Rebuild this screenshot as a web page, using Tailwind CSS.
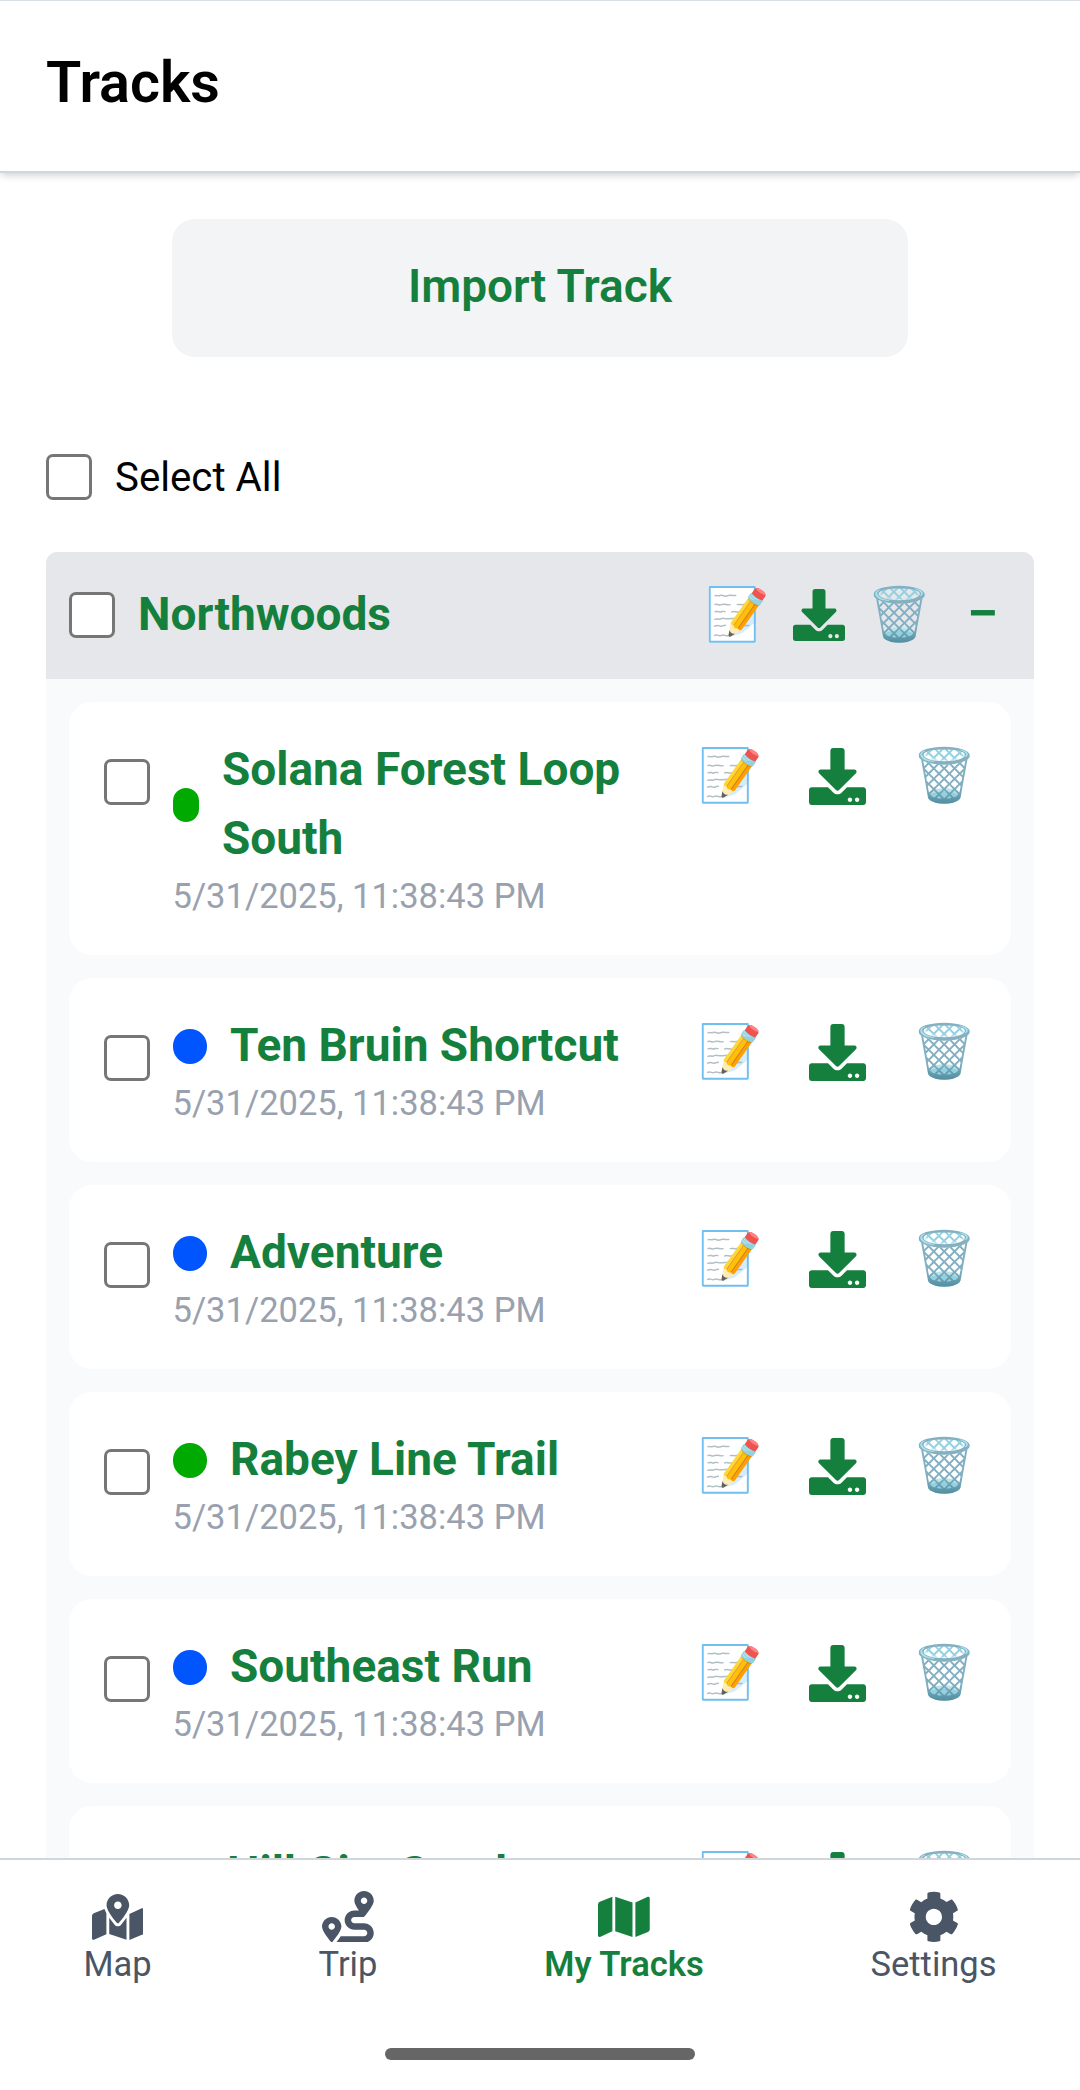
<!DOCTYPE html>
<html lang="en">
<head>
<meta charset="utf-8">
<title>Tracks</title>
<script src="https://cdn.jsdelivr.net/npm/@tailwindcss/browser@4"></script>
</head>
<body class="h-[2090px] w-[1080px] overflow-hidden bg-white font-[Roboto,sans-serif] text-black">
<svg class="hidden">
  <symbol id="download" viewBox="0 0 512 512"><path d="M216 0h80c13.3 0 24 10.7 24 24v168h87.7c17.8 0 26.7 21.5 14.1 34.1L269.7 378.3c-7.5 7.5-19.8 7.5-27.3 0L90.1 226.1c-12.6-12.6-3.7-34.1 14.1-34.1H192V24c0-13.3 10.7-24 24-24zm296 376v112c0 13.3-10.7 24-24 24H24c-13.3 0-24-10.7-24-24V376c0-13.3 10.7-24 24-24h146.7l49 49c20.1 20.1 52.5 20.1 72.6 0l49-49H488c13.3 0 24 10.7 24 24zm-124 88c0-11-9-20-20-20s-20 9-20 20 9 20 20 20 20-9 20-20zm64 0c0-11-9-20-20-20s-20 9-20 20 9 20 20 20 20-9 20-20z"/></symbol>
</svg>
<div class="flex h-full flex-col">
  <header class="relative z-10 flex h-[173px] shrink-0 items-center border-t border-b-2 border-t-[#d9e0ea] border-b-gray-300 bg-white px-[46px] pb-[6px] shadow-[0_3px_8px_-1px_rgba(0,0,0,0.2)]">
    <h1 class="text-[57.5px] leading-[80px] font-semibold">Tracks</h1>
  </header>

  <main class="flex min-h-0 flex-1 flex-col overflow-hidden px-[46px] pt-[46px]">
    <button class="h-[138px] w-[736px] shrink-0 self-center rounded-[23px] bg-gray-100 pb-[4px] text-[46px] font-semibold text-[#15803d]">Import Track</button>

    <label class="mt-[97px] flex h-[46px] shrink-0 items-center gap-[23px] text-[40.25px] leading-[46px]">
      <span class="size-[46px] rounded-[7px] border-3 border-[#767676] bg-white"></span><span class="pt-[2px]">Select All</span>
    </label>

    <section class="mt-[52px] shrink-0 overflow-hidden rounded-[11.5px] bg-gray-50">
      <div class="flex h-[127px] items-center bg-gray-200 pr-[34px] pb-[2px] pl-[23px] text-[46px] font-bold text-[#15803d]">
        <span class="mr-[23px] size-[46px] rounded-[7px] border-3 border-[#767676] bg-white"></span>
        <h2 class="flex-1">Northwoods</h2>
        <span class="flex w-[57px] justify-center pr-[1.5px] text-[51.75px] leading-[57px] font-normal">📝</span>
        <svg class="ml-[27px] size-[52px] fill-current"><use href="#download"/></svg>
        <span class="ml-[26px] flex w-[57px] justify-center pr-[1.5px] text-[51.75px] leading-[57px] font-normal">🗑️</span>
        <span class="ml-[38px] w-[34px] pb-[2px] text-center text-[57.5px] leading-[57px] font-medium">−</span>
      </div>
      <div id="tracks" class="flex flex-col gap-[23px] px-[23px] py-[23px]"></div>
    </section>
  </main>

  <nav class="flex h-[232px] shrink-0 flex-col border-t-2 border-gray-300 bg-white">
    <div class="flex justify-around pt-[30.5px] text-[34.5px] leading-[44px] text-gray-600">
      <a class="flex flex-col items-center"><svg class="size-[51.75px] fill-current" viewBox="0 0 576 512"><path d="M288 0c-69.59 0-126 56.41-126 126 0 56.26 82.35 158.8 113.9 196.02 6.39 7.54 17.82 7.54 24.2 0C331.65 284.8 414 182.26 414 126 414 56.41 357.59 0 288 0zm0 168c-23.2 0-42-18.8-42-42s18.8-42 42-42 42 18.8 42 42-18.8 42-42 42zM20.12 215.95A32.006 32.006 0 0 0 0 245.66v250.32c0 11.32 11.43 19.06 21.94 14.86L160 448V214.92c-8.84-15.98-16.07-31.54-21.25-46.42L20.12 215.95zM288 359.67c-14.07 0-27.38-6.18-36.51-16.96-19.66-23.2-40.57-49.62-59.49-76.72v182l192 64V266c-18.92 27.09-39.82 53.52-59.49 76.72-9.13 10.77-22.44 16.95-36.51 16.95zm266.06-198.51L416 224v288l139.88-55.95A31.996 31.996 0 0 0 576 426.34V176.02c0-11.32-11.43-19.06-21.94-14.86z"/></svg>Map</a>
      <a class="flex flex-col items-center"><svg class="size-[51.75px] fill-current" viewBox="0 0 512 512"><path d="M416 320h-96c-17.6 0-32-14.4-32-32s14.4-32 32-32h96s96-107 96-160-43-96-96-96-96 43-96 96c0 25.5 22.2 63.4 45.3 96H320c-52.9 0-96 43.1-96 96s43.1 96 96 96h96c17.6 0 32 14.4 32 32s-14.4 32-32 32H185.5c-16 24.8-33.8 47.7-47.3 64H416c52.9 0 96-43.1 96-96s-43.1-96-96-96zm0-256c17.7 0 32 14.3 32 32s-14.3 32-32 32-32-14.3-32-32 14.3-32 32-32zM96 256c-53 0-96 43-96 96s96 160 96 160 96-107 96-160-43-96-96-96zm0 128c-17.7 0-32-14.3-32-32s14.3-32 32-32 32 14.3 32 32-14.3 32-32 32z"/></svg>Trip</a>
      <a class="flex flex-col items-center font-semibold text-[#15803d]"><svg class="size-[51.75px] fill-current" viewBox="0 0 576 512"><path d="M0 117.66v346.32c0 11.32 11.43 19.06 21.94 14.86L160 416V32L20.12 87.95A32.006 32.006 0 0 0 0 117.66zM192 416l192 64V96L192 32v384zM554.06 33.16L416 96v384l139.88-55.95A31.996 31.996 0 0 0 576 394.34V48.02c0-11.32-11.43-19.06-21.94-14.86z"/></svg>My Tracks</a>
      <a class="flex flex-col items-center"><svg class="size-[51.75px] fill-current" viewBox="0 0 512 512"><path d="M487.4 315.7l-42.6-24.6c4.3-23.2 4.3-47 0-70.2l42.6-24.6c4.9-2.8 7.1-8.6 5.5-14-11.1-35.6-30-67.8-54.7-94.6-3.8-4.1-10-5.1-14.8-2.3L380.8 110c-17.9-15.4-38.5-27.3-60.8-35.1V25.8c0-5.6-3.9-10.5-9.4-11.7-36.7-8.2-74.3-7.8-109.2 0-5.5 1.2-9.4 6.1-9.4 11.7V75c-22.2 7.9-42.8 19.8-60.8 35.1L88.7 85.5c-4.9-2.8-11-1.9-14.8 2.3-24.7 26.7-43.6 58.9-54.7 94.6-1.7 5.4.6 11.2 5.5 14L67.3 221c-4.3 23.2-4.3 47 0 70.2l-42.6 24.6c-4.9 2.8-7.1 8.6-5.5 14 11.1 35.6 30 67.8 54.7 94.6 3.8 4.1 10 5.1 14.8 2.3l42.6-24.6c17.9 15.4 38.5 27.3 60.8 35.1v49.2c0 5.6 3.9 10.5 9.4 11.7 36.7 8.2 74.3 7.8 109.2 0 5.5-1.2 9.4-6.1 9.4-11.7v-49.2c22.2-7.9 42.8-19.8 60.8-35.1l42.6 24.6c4.9 2.8 11 1.9 14.8-2.3 24.7-26.7 43.6-58.9 54.7-94.6 1.5-5.5-.7-11.3-5.6-14.1zM256 336c-44.1 0-80-35.9-80-80s35.9-80 80-80 80 35.9 80 80-35.9 80-80 80z"/></svg>Settings</a>
    </div>
    <div class="mt-auto mb-[30px] h-[12px] w-[310px] self-center rounded-full bg-[#666]"></div>
  </nav>
</div>
<script>
// name, dot classes, title height
const tracks = [
  ["Solana Forest Loop South", "w-[26.5px] bg-[#00aa00]", "min-h-[138px]"],
  ["Ten Bruin Shortcut", "w-[34.5px] bg-[#0055ff]", "min-h-[69px]"],
  ["Adventure", "w-[34.5px] bg-[#0055ff]", "min-h-[69px]"],
  ["Rabey Line Trail", "w-[34.5px] bg-[#00aa00]", "min-h-[69px]"],
  ["Southeast Run", "w-[34.5px] bg-[#0055ff]", "min-h-[69px]"],
  ["Hill City South", "w-[31.5px] bg-[#00aa00]", "min-h-[138px]"],
];
document.getElementById("tracks").innerHTML = tracks.map(([name, dot, height]) => `
  <article class="flex items-start rounded-[23px] bg-white pt-[33px] pr-[38px] pb-[36px] pl-[34.5px]">
    <span class="mt-[24px] size-[46px] shrink-0 rounded-[7px] border-3 border-[#767676] bg-white"></span>
    <div class="ml-[23px] w-[460px]">
      <div class="flex items-center gap-[23px]">
        <span class="mt-[2px] h-[34.5px] shrink-0 rounded-[17px] ${dot}"></span>
        <h3 class="text-[46px] leading-[69px] font-bold text-[#15803d] ${height}">${name}</h3>
      </div>
      <p class="text-[34.5px] leading-[46px] text-gray-400">5/31/2025, 11:38:43 PM</p>
    </div>
    <div class="mt-[11.5px] ml-auto flex items-center gap-[50px] text-[51.75px] leading-[57px] text-[#15803d]">
      <span class="flex w-[57px] justify-center pr-[1.5px] pb-[2px]">📝</span>
      <svg class="size-[57px] fill-current"><use href="#download"/></svg>
      <span class="flex w-[57px] justify-center pr-[1.5px] pb-[2px]">🗑️</span>
    </div>
  </article>`).join("");
</script>
</body>
</html>
